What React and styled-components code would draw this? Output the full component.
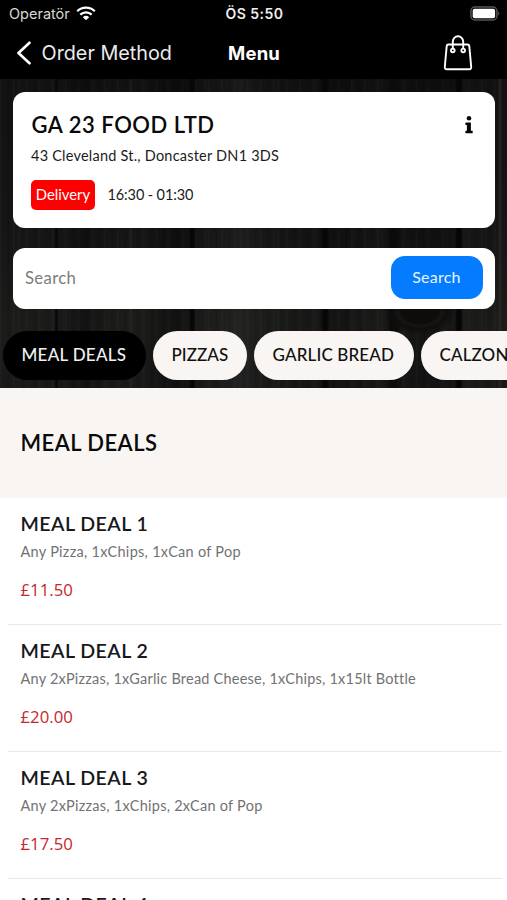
import React from 'react';
import styled, { createGlobalStyle } from 'styled-components';

const GlobalStyle = createGlobalStyle`
  * { box-sizing: border-box; }
  body { margin: 0; background: #fff; }
`;

const Screen = styled.div`
  width: 507px;
  height: 900px;
  overflow: hidden;
  background: #fff;
  font-family: Lato, "Liberation Sans", sans-serif;
  white-space: nowrap;
`;

const StatusBar = styled.div`
  display: grid;
  grid-template-columns: 1fr auto 1fr;
  align-items: center;
  height: 27px;
  padding: 0 7px 0 9px;
  background: #000;
  color: #d8d8d8;
  font: 400 14.5px/27px Inter, sans-serif;
`;

const Carrier = styled.div`
  display: flex;
  align-items: center;
  gap: 6px;
`;

const Clock = styled.div`
  color: #eee;
  font-weight: 600;
  font-size: 14px;
  letter-spacing: 0.5px;
`;

const BatterySlot = styled.div`
  display: flex;
  justify-content: flex-end;
`;

const NavBar = styled.header`
  display: grid;
  grid-template-columns: 212px 1fr auto;
  align-items: center;
  height: 52px;
  padding: 0 34px 0 16px;
  background: #000;
  color: #fff;
`;

const BackButton = styled.div`
  display: flex;
  align-items: center;
  gap: 9.5px;
  color: #ececec;
  font: 400 19.8px/26px Inter, sans-serif;
`;

const NavTitle = styled.div`
  font: 700 18.5px/26px Inter, sans-serif;
  letter-spacing: 0.2px;
`;

const BagSlot = styled.div`
  display: flex;
  padding-bottom: 1px;
`;

const Hero = styled.section`
  height: 309px;
  padding-top: 13px;
  overflow: hidden;
  background:
    radial-gradient(ellipse 36px 24px at 420px 232px, #0d0c0b 0 50%, #181513 62%, #0f0e0d 74%, transparent 100%),
    linear-gradient(90deg, transparent 54px, #080808 56px 57px, transparent 59px 189px, #060606 191px 193px, transparent 196px 321px, #070707 323px 327px, transparent 330px 386px, #0c0b0b 390px 396px, transparent 402px 454px, #060606 457px 461px, transparent 463px 498px, #262626 500px, transparent 502px),
    linear-gradient(90deg, transparent 60px, rgba(0,0,0,.3) 85px, transparent 110px 140px, rgba(0,0,0,.35) 175px, transparent 205px, rgba(255,255,255,.03) 240px, transparent 270px, rgba(0,0,0,.25) 345px, transparent 380px, rgba(0,0,0,.3) 430px, transparent 465px),
    repeating-linear-gradient(90deg, rgba(255,255,255,.022) 0 1px, transparent 2px 6px, rgba(0,0,0,.12) 8px 9px, transparent 11px 13px),
    repeating-linear-gradient(90deg, transparent 0 17px, rgba(255,255,255,.02) 19px 20px, transparent 23px 37px),
    linear-gradient(#121212, #151515 45%, #1c1c1b 80%, #191919);
`;

const StoreCard = styled.div`
  display: flex;
  flex-direction: column;
  height: 136px;
  margin: 0 12.5px;
  padding: 17.5px 22px 0 18.5px;
  border-radius: 12px;
  background: #fff;
`;

const StoreHeading = styled.div`
  display: flex;
  justify-content: space-between;
  align-items: center;
  height: 30px;
`;

const StoreName = styled.h1`
  margin: 0;
  padding-left: 0.5px;
  color: #0a0a0a;
  font-size: 22px;
  font-weight: 600;
  line-height: 30px;
  letter-spacing: 0.52px;
`;

const Address = styled.div`
  margin-top: 6px;
  color: #1c1c1c;
  font-size: 14.5px;
  line-height: 20px;
  letter-spacing: 0.22px;
`;

const Availability = styled.div`
  display: flex;
  align-items: center;
  gap: 12.5px;
  margin-top: 14px;
  color: #1c1c1c;
  font-size: 14.5px;
  line-height: 20px;
  letter-spacing: -0.12px;
`;

const ServiceTag = styled.span`
  width: 64px;
  height: 30px;
  border-radius: 5px;
  background: #fe0000;
  color: #fff;
  font-size: 14.8px;
  line-height: 29px;
  letter-spacing: 0;
  text-align: center;
`;

const SearchBox = styled.div`
  display: flex;
  align-items: center;
  justify-content: space-between;
  height: 61px;
  margin: 20px 12.5px 0;
  padding: 0 12px 0 12.5px;
  border-radius: 12px;
  background: #fff;
`;

const Placeholder = styled.span`
  padding-bottom: 1px;
  color: #7c7c7c;
  font-size: 16.7px;
  letter-spacing: 0.35px;
`;

const SearchButton = styled.div`
  width: 92px;
  height: 43px;
  margin-top: -2px;
  border-radius: 14px;
  background: #057cff;
  color: #eaf4ff;
  font-size: 16px;
  line-height: 41px;
  letter-spacing: 0.25px;
  text-align: center;
`;

const Tabs = styled.nav`
  display: flex;
  gap: 7.5px;
  padding: 22px 0 0 3px;
`;

const Tab = styled.div`
  flex: none;
  width: ${(p) => p.$width}px;
  height: 49px;
  border-radius: 24.5px;
  padding-left: 18.5px;
  background: ${(p) => (p.$active ? '#000' : '#f8f5f2')};
  color: ${(p) => (p.$active ? '#f0f0f0' : '#111')};
  font-size: 17px;
  font-weight: 500;
  line-height: 48px;
  letter-spacing: ${(p) => p.$spacing}px;
`;

const SectionHeader = styled.div`
  height: 109.5px;
  padding-left: 20.5px;
  background: #f8f5f2;
`;

const SectionTitle = styled.h2`
  margin: 0;
  color: #0a0a0a;
  font-size: 22px;
  font-weight: 600;
  line-height: 110px;
  letter-spacing: 0.45px;
`;

const Item = styled.article`
  height: 127px;
  margin: 0 5px 0 8px;
  padding: 13.5px 0 0 12.5px;
  border-bottom: 1.5px solid #e9e9ea;
`;

const ItemName = styled.h3`
  margin: 0;
  color: #18191c;
  font-size: 19.6px;
  font-weight: 600;
  line-height: 25px;
  letter-spacing: 0.45px;
`;

const Description = styled.p`
  min-height: 20px;
  margin: 6px 0 0;
  color: #727272;
  font-size: 14.5px;
  line-height: 20px;
  letter-spacing: ${(p) => p.$spacing || 0.25}px;
`;

const Price = styled.div`
  margin-top: 15.5px;
  color: #c4282d;
  font: 400 16.8px/24px "Open Sans", sans-serif;
`;

const tabs = [
  { label: 'MEAL DEALS', width: 142.5, spacing: 0.27, active: true },
  { label: 'PIZZAS', width: 93.5, spacing: 0.05 },
  { label: 'GARLIC BREAD', width: 159.5, spacing: 0.14 },
  { label: 'CALZONE', width: 117, spacing: 0.12 },
];

const deals = [
  { name: 'MEAL DEAL 1', text: 'Any Pizza, 1xChips, 1xCan of Pop', price: '£11.50', spacing: 0.28 },
  { name: 'MEAL DEAL 2', text: 'Any 2xPizzas, 1xGarlic Bread Cheese, 1xChips, 1x15lt Bottle', price: '£20.00', spacing: 0.22 },
  { name: 'MEAL DEAL 3', text: 'Any 2xPizzas, 1xChips, 2xCan of Pop', price: '£17.50' },
  { name: 'MEAL DEAL 4', text: '', price: '' },
];

const WifiIcon = () => (
  <svg width="20" height="15" viewBox="0 0 20 15" fill="none" stroke="#fff" strokeWidth="2.2">
    <path d="M1.2 5.3C6.1.5 13.9.5 18.8 5.3" />
    <path d="M4.3 8.6C7.5 5.5 12.5 5.5 15.7 8.6" />
    <path d="M6.8 11.2Q10 8.3 13.2 11.2L10 14.3Z" fill="#fff" stroke="none" />
  </svg>
);

const BatteryIcon = () => (
  <svg width="30" height="15" viewBox="0 0 30 15">
    <rect x=".9" y="1" width="26" height="13" rx="4" fill="none" stroke="#555" strokeWidth="1.5" />
    <rect x="2.7" y="2.8" width="22.4" height="9.4" rx="2" fill="#fff" />
    <path d="M28.2 5.2q2.2 2.3 0 4.6z" fill="#555" />
  </svg>
);

const ChevronIcon = () => (
  <svg width="16" height="24" viewBox="0 0 16 24" fill="none" stroke="#fff" strokeWidth="2.7" strokeLinecap="round" strokeLinejoin="round">
    <path d="M13.5 1.8 2.5 12l11 10.2" />
  </svg>
);

const BagIcon = () => (
  <svg width="30" height="36" viewBox="0 0 30 36" fill="none" stroke="#fff" strokeWidth="1.9" strokeLinejoin="round">
    <path d="M5.4 9.5h19.2q1.5 0 1.7 1.6l1.9 20.8q.2 2.3-1.9 2.3H3.7q-2.1 0-1.9-2.3l1.9-20.8q.2-1.6 1.7-1.6Z" />
    <path d="M9.8 14V6.5a5.2 5.2 0 0 1 10.4 0V14" />
    <circle cx="9.8" cy="15.4" r="1.8" />
    <circle cx="20.2" cy="15.4" r="1.8" />
  </svg>
);

const InfoIcon = () => (
  <svg width="8" height="18" viewBox="0 0 8 18" fill="#050505">
    <circle cx="4" cy="2.3" r="2.3" />
    <path d="M.9 6.4h5v8.3h1.3q.5 0 .5.5v1.6q0 .5-.5.5H.9q-.5 0-.5-.5v-1.6q0-.5.5-.5h1V9H.9q-.5 0-.5-.5V6.9q0-.5.5-.5Z" />
  </svg>
);

export default function App() {
  return (
    <Screen>
      <GlobalStyle />
      <StatusBar>
        <Carrier>Operatör <WifiIcon /></Carrier>
        <Clock>ÖS 5:50</Clock>
        <BatterySlot><BatteryIcon /></BatterySlot>
      </StatusBar>
      <NavBar>
        <BackButton><ChevronIcon />Order Method</BackButton>
        <NavTitle>Menu</NavTitle>
        <BagSlot><BagIcon /></BagSlot>
      </NavBar>
      <Hero>
        <StoreCard>
          <StoreHeading>
            <StoreName>GA 23 FOOD LTD</StoreName>
            <InfoIcon />
          </StoreHeading>
          <Address>43 Cleveland St., Doncaster DN1 3DS</Address>
          <Availability>
            <ServiceTag>Delivery</ServiceTag>
            16:30 - 01:30
          </Availability>
        </StoreCard>
        <SearchBox>
          <Placeholder>Search</Placeholder>
          <SearchButton>Search</SearchButton>
        </SearchBox>
        <Tabs>
          {tabs.map((t) => (
            <Tab key={t.label} $width={t.width} $spacing={t.spacing} $active={t.active}>{t.label}</Tab>
          ))}
        </Tabs>
      </Hero>
      <SectionHeader>
        <SectionTitle>MEAL DEALS</SectionTitle>
      </SectionHeader>
      {deals.map((d) => (
        <Item key={d.name}>
          <ItemName>{d.name}</ItemName>
          <Description $spacing={d.spacing}>{d.text}</Description>
          <Price>{d.price}</Price>
        </Item>
      ))}
    </Screen>
  );
}
